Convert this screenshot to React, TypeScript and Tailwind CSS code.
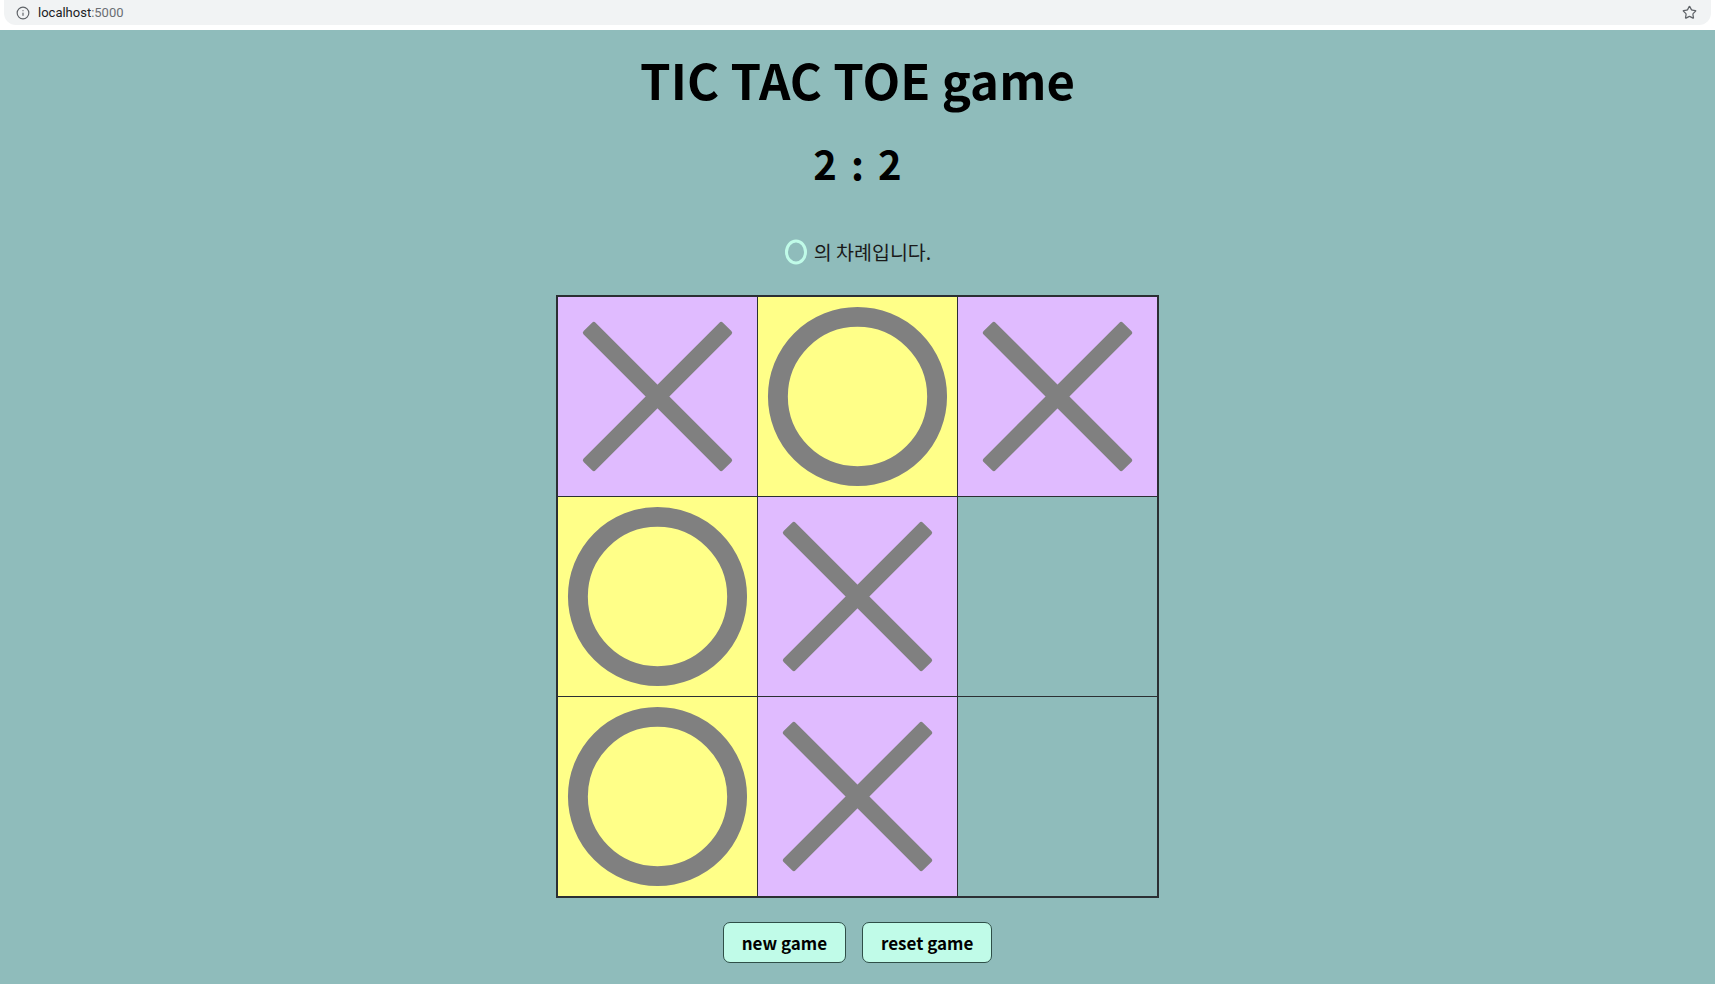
import { Info, Star } from "lucide-react";

type Mark = "X" | "O" | null;

const board: Mark[] = ["X", "O", "X", "O", "X", null, "O", "X", null];

function XMark() {
  return (
    <svg viewBox="0 0 200 200" className="w-full h-full">
      <rect x="1" y="91.5" width="198" height="17" rx="2.5" fill="#808080" transform="rotate(45 100 100)" />
      <rect x="1" y="91.5" width="198" height="17" rx="2.5" fill="#808080" transform="rotate(-45 100 100)" />
    </svg>
  );
}

function OMark() {
  return (
    <svg viewBox="0 0 200 200" className="w-full h-full">
      <circle cx="100" cy="100" r="80" fill="none" stroke="#808080" strokeWidth="20" />
    </svg>
  );
}

function Cell({ mark }: { mark: Mark }) {
  const bg = mark === "X" ? "bg-[#e0bbff]" : mark === "O" ? "bg-[#ffff88]" : "bg-[#8fbcbb]";
  return (
    <div className={`w-[199px] h-[199px] ${bg}`}>
      {mark === "X" && <XMark />}
      {mark === "O" && <OMark />}
    </div>
  );
}

function BrowserBar() {
  return (
    <div className="h-[30px] bg-white">
      <div className="h-[25px] mx-[4px] bg-[#f1f3f4] rounded-b-[12px] flex items-center justify-between pl-[12px] pr-[14px]">
        <div className="flex items-center gap-[8px]">
          <Info className="w-[14px] h-[14px] text-[#5f6368]" strokeWidth={2} />
          <span className="text-[13px] text-[#202124]" style={{ fontFamily: "Roboto, 'Open Sans', sans-serif" }}>
            localhost<span className="text-[#6a6e73]">:5000</span>
          </span>
        </div>
        <Star className="w-[15px] h-[15px] text-[#5f6368]" strokeWidth={2} />
      </div>
    </div>
  );
}

export default function App() {
  return (
    <div
      className="min-h-screen bg-[#8fbcbb] text-black"
      style={{ fontFamily: "'Noto Sans CJK KR', 'Noto Sans', sans-serif" }}
    >
      <BrowserBar />
      <div className="flex flex-col items-center">
        <h1 className="mt-[20px] text-[49px] leading-[58px] font-bold tracking-[0.1px]">TIC TAC TOE game</h1>
        <h2 className="mt-[32px] text-[40px] leading-[46px] font-bold [word-spacing:5px]">2 : 2</h2>
        <div className="mt-[54px] h-[24px] flex items-center gap-[6px] text-[19.5px] leading-[24px] text-[#1a1a1a]">
          <svg width="24" height="26" viewBox="0 0 24 26">
            <ellipse cx="12" cy="13" rx="9.5" ry="11" fill="none" stroke="#c0fbe8" strokeWidth="3" />
          </svg>
          <span>의 차례입니다.</span>
        </div>
        <div className="mt-[31px] border-2 border-[#2b2f33]">
          <div className="grid grid-cols-3 gap-px bg-[#2b2f33]">
            {board.map((m, i) => (
              <Cell key={i} mark={m} />
            ))}
          </div>
        </div>
        <div className="mt-[24px] flex gap-[16px]">
          <button className="h-[41px] px-[18px] rounded-[7px] border border-[#2f4f48] bg-[#c0fbe8] text-[17px] font-bold">
            new game
          </button>
          <button className="h-[41px] px-[18px] rounded-[7px] border border-[#2f4f48] bg-[#c0fbe8] text-[17px] font-bold">
            reset game
          </button>
        </div>
      </div>
    </div>
  );
}
